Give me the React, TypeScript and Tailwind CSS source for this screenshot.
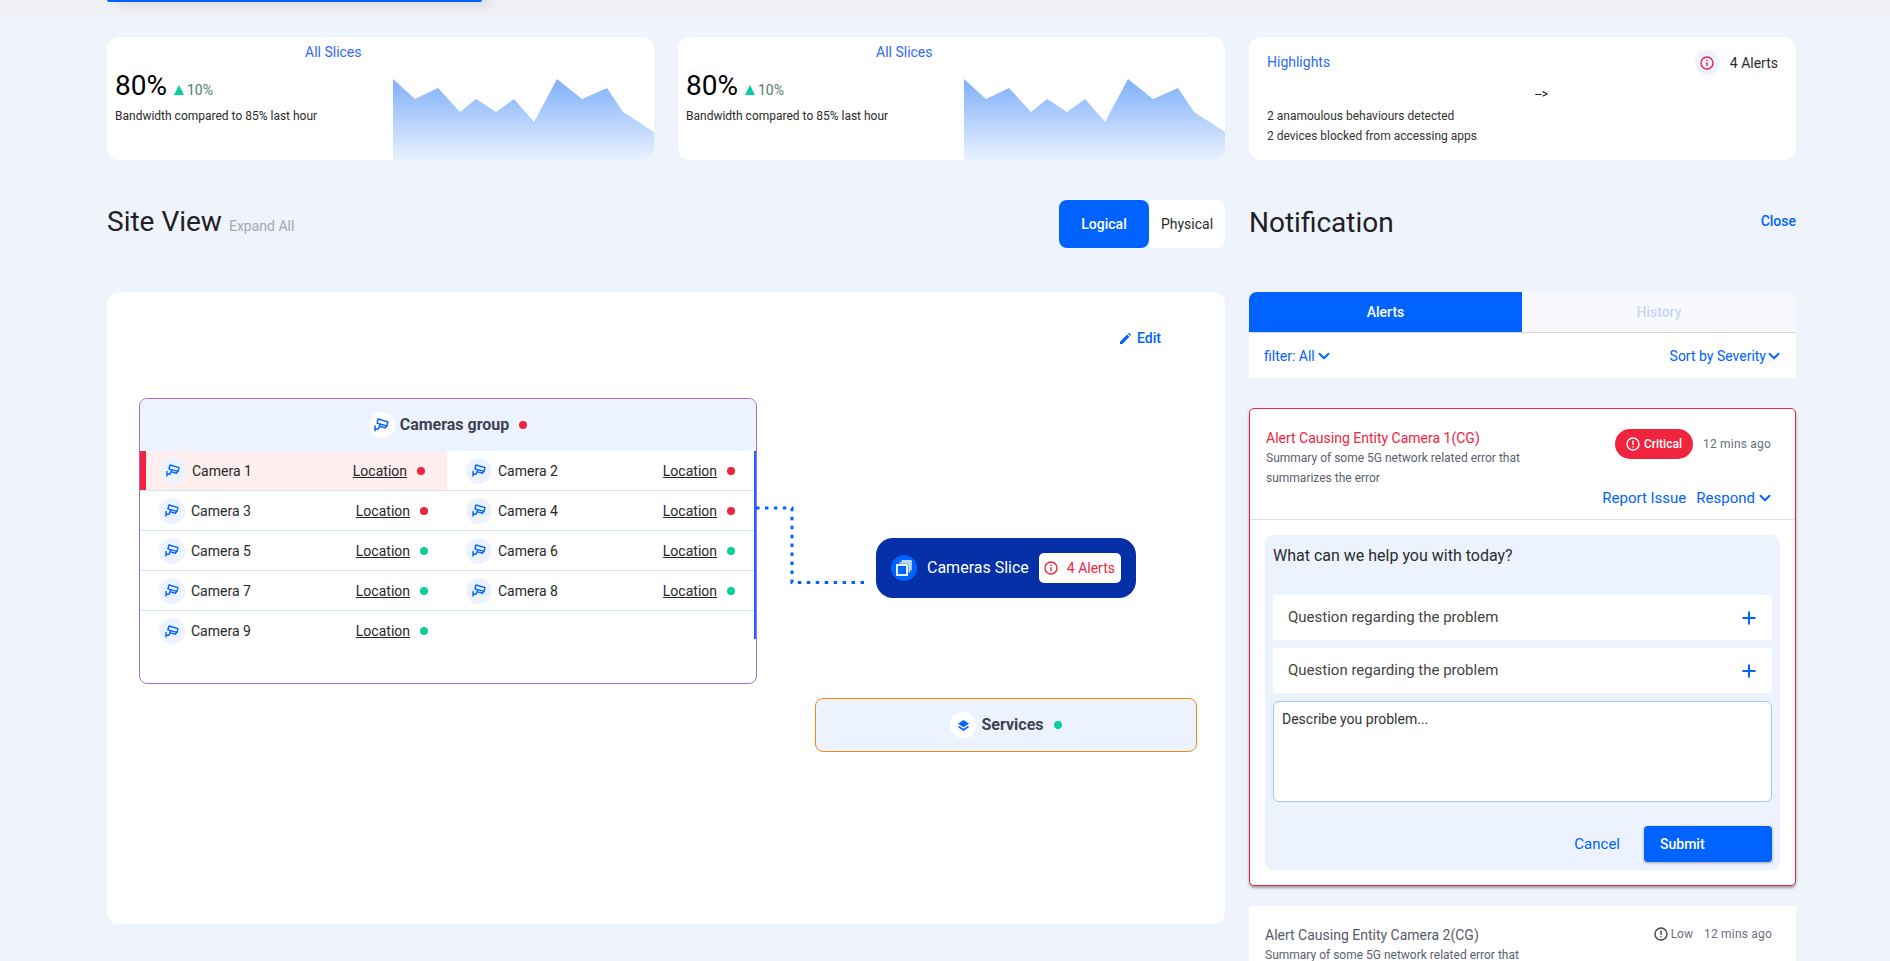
import { ChevronDown, Plus } from 'lucide-react';

const FONT = "font-['Roboto',sans-serif]";

function CameraIcon({ size = 14 }: { size?: number }) {
  return (
    <svg width={size} height={(size * 13) / 14} viewBox="0 0 14 13" fill="none" stroke="#0062ff" strokeWidth="1.4" strokeLinejoin="round" strokeLinecap="round">
      <path d="M4 1 13 3.6 11.9 7.4 2.9 4.8Z" />
      <path d="M11.9 7.4 10.4 9.2 5.6 7.9" />
      <path d="M1 7.5V12M1 10.2H4L5.6 6" />
    </svg>
  );
}

function StackIcon() {
  return (
    <svg width="13" height="13" viewBox="0 0 14 14" fill="#0062ff">
      <path d="M7 1 13 5 7 9 1 5Z" />
      <path d="M2.4 7.6 7 10.6 11.6 7.6 13 8.6 7 13 1 8.6Z" />
    </svg>
  );
}

function SliceIcon() {
  return (
    <svg width="16" height="16" viewBox="0 0 16 16" fill="none" stroke="#fff" strokeWidth="1.3">
      <rect x="1" y="5" width="10" height="10" strokeWidth="1.8" />
      <path d="M3.5 2.8H13.2V12.5" />
      <path d="M5.5 1H15V10.5" />
    </svg>
  );
}

function InfoIcon({ size = 14, color = '#f0243f' }: { size?: number; color?: string }) {
  return (
    <svg width={size} height={size} viewBox="0 0 14 14" fill="none" stroke={color} strokeWidth="1.4">
      <circle cx="7" cy="7" r="6" />
      <path d="M7 6.2V10" />
      <path d="M7 3.8V5" />
    </svg>
  );
}

function WarnIcon({ size = 14, color = '#fff' }: { size?: number; color?: string }) {
  return (
    <svg width={size} height={size} viewBox="0 0 14 14" fill="none" stroke={color} strokeWidth="1.4">
      <circle cx="7" cy="7" r="6" />
      <path d="M7 3.6V8" />
      <path d="M7 9.2V10.5" />
    </svg>
  );
}

function Dot({ ok }: { ok: boolean }) {
  return <span className={`w-2 h-2 rounded-full shrink-0 ${ok ? 'bg-[#07d09a]' : 'bg-[#f0243f]'}`} />;
}

function SliceCard() {
  return (
    <div className="relative h-[123px] bg-white rounded-xl overflow-hidden">
      <div className="h-[30px] pt-[6px] pl-[198px] text-sm leading-[18px] text-[#2f6bf2]">All Slices</div>
      <div className="pl-[8px] pt-[3px] flex items-baseline">
        <span className="text-[28px] leading-[32px] text-black">80%</span>
        <span className="ml-[7px] w-0 h-0 border-l-[5px] border-r-[5px] border-b-[10px] border-l-transparent border-r-transparent border-b-[#07d09a]" />
        <span className="ml-[3px] text-sm text-[#4f7d6a]">10%</span>
      </div>
      <div className="pl-[8px] mt-[5px] text-xs leading-[18px] text-[#2b2b2b]">Bandwidth compared to 85% last hour</div>
      <svg className="absolute right-0 bottom-0" width="261" height="81" viewBox="0 0 261 81">
        <defs>
          <linearGradient id="area" x1="0" y1="0" x2="0" y2="1">
            <stop offset="0%" stopColor="#7fb0fa" />
            <stop offset="100%" stopColor="#e9f1fe" />
          </linearGradient>
        </defs>
        <path d="M0 0 22 20 45 9 67 33 83 20 103 33 121 20 141 43 164 0 189 20 214 9 230 33 261 53V81H0Z" fill="url(#area)" />
      </svg>
    </div>
  );
}

function CamCell({ name, ok, active }: { name: string; ok: boolean; active?: boolean }) {
  return (
    <div className={`w-1/2 shrink-0 h-full flex items-center ${active ? 'bg-[#ffeeee] border-l-[6px] border-[#f0243f] pl-[14px] pr-[22px]' : 'px-[19px]'}`}>
      <span className="w-[26px] h-[26px] rounded-full bg-[#ecf3ff] flex items-center justify-center shrink-0">
        <CameraIcon />
      </span>
      <span className="ml-[6px] text-sm text-[#26272b]">{name}</span>
      <a className="ml-auto text-sm underline text-[#26272b]">Location</a>
      <span className="ml-[10px] flex"><Dot ok={ok} /></span>
    </div>
  );
}

function CamRow({ children, last }: { children: React.ReactNode; last?: boolean }) {
  return <div className={`flex shrink-0 h-[40px] ${last ? '' : 'border-b border-[#d5e0f5]'}`}>{children}</div>;
}

function SiteView() {
  return (
    <div className="relative mt-[44px] h-[632px] bg-white rounded-xl">
      <div className="absolute right-[64px] top-[36px] flex items-center gap-[6px] text-sm font-medium text-[#0062ff]">
        <svg width="11" height="11" viewBox="0 0 11 11" fill="#0062ff"><path d="M0 11V8.8L7.2 1.6 9.4 3.8 2.2 11ZM8 .8 8.5.3a.8.8 0 0 1 1.1 0l1.1 1.1a.8.8 0 0 1 0 1.1l-.5.5Z" /></svg>
        Edit
      </div>

      {/* Cameras group */}
      <div className="absolute left-[32px] top-[106px] w-[618px] h-[286px] border border-[#b366dd] rounded-lg overflow-hidden">
        <div className="h-[52px] bg-[#ecf3ff] rounded-b-lg flex items-center justify-center">
          <span className="w-[26px] h-[26px] rounded-full bg-white flex items-center justify-center">
            <CameraIcon size={15} />
          </span>
          <span className="ml-[5px] text-base font-bold text-[#3f4252]">Cameras group</span>
          <span className="ml-[10px] flex"><Dot ok={false} /></span>
        </div>
        <div className="h-[188px] border-r-2 border-[#1f66ff] flex flex-col">
          <CamRow><CamCell name="Camera 1" ok={false} active /><CamCell name="Camera 2" ok={false} /></CamRow>
          <CamRow><CamCell name="Camera 3" ok={false} /><CamCell name="Camera 4" ok={false} /></CamRow>
          <CamRow><CamCell name="Camera 5" ok /><CamCell name="Camera 6" ok /></CamRow>
          <CamRow><CamCell name="Camera 7" ok /><CamCell name="Camera 8" ok /></CamRow>
          <CamRow last><CamCell name="Camera 9" ok /></CamRow>
        </div>
      </div>

      {/* connector */}
      <svg className="absolute left-[649px] top-[214px]" width="112" height="80" viewBox="0 0 112 80" fill="none">
        <path d="M0 2H36V76.5H108" stroke="#0062ff" strokeWidth="3" strokeDasharray="3.5 5.45" />
      </svg>

      {/* Cameras slice */}
      <div className="absolute left-[769px] top-[246px] w-[260px] h-[60px] rounded-[17px] bg-[#0530a8] flex items-center pl-[15px]">
        <span className="w-[26px] h-[26px] rounded-full bg-[#0062ff] flex items-center justify-center">
          <SliceIcon />
        </span>
        <span className="ml-[10px] text-base text-white">Cameras Slice</span>
        <span className="ml-[10px] w-[82px] h-[30px] rounded-[5px] bg-white flex items-center pl-[5px]">
          <InfoIcon />
          <span className="ml-[9px] text-sm text-[#f0243f]">4 Alerts</span>
        </span>
      </div>

      {/* Services */}
      <div className="absolute left-[708px] top-[406px] w-[382px] h-[54px] border border-[#f58a07] rounded-lg bg-[#ecf3ff] flex items-center justify-center">
        <span className="w-[26px] h-[26px] rounded-full bg-white flex items-center justify-center">
          <StackIcon />
        </span>
        <span className="ml-[5px] text-base font-bold text-[#3f4252]">Services</span>
        <span className="ml-[10px] flex"><Dot ok /></span>
      </div>
    </div>
  );
}

function Accordion() {
  return (
    <div className="h-[45px] bg-white flex items-center justify-between pl-[15px] pr-[13px] text-[15px] text-[#444]">
      Question regarding the problem
      <Plus size={20} strokeWidth={2.4} className="text-[#0062ff]" />
    </div>
  );
}

function Notification() {
  return (
    <div className="mt-[44px]">
      <div className="rounded-t-lg overflow-hidden flex h-[41px] border-b border-[#d4d6df] text-sm font-medium">
        <div className="w-[273px] bg-[#0062ff] text-white flex items-center justify-center">Alerts</div>
        <div className="flex-1 bg-[#f8f9fe] text-[#c7d6f7] flex items-center justify-center">History</div>
      </div>
      <div className="h-[45px] bg-white px-[15px] flex items-center justify-between text-sm text-[#0062ff]">
        <span className="flex items-center">filter: All <ChevronDown size={18} strokeWidth={2.5} /></span>
        <span className="flex items-center">Sort by Severity <ChevronDown size={18} strokeWidth={2.5} className="-ml-[1px] -mr-[2px]" /></span>
      </div>

      {/* Open alert */}
      <div className="mt-[30px] h-[478px] bg-white border border-[#f0243f] rounded-[5px] shadow-[0_2px_3px_rgba(0,0,0,0.35)]">
        <div className="relative h-[111px] border-b border-[#dfe0e3] pl-4 pt-5">
          <div className="text-sm leading-[18px] text-[#f0243f]">Alert Causing Entity Camera 1(CG)</div>
          <div className="mt-[1px] text-xs leading-5 text-[#5a5f6f]">Summary of some 5G network related error that<br />summarizes the error</div>
          <div className="absolute right-[24px] top-[20px] flex items-center">
            <span className="h-[30px] w-[78px] rounded-full bg-[#f0243f] flex items-center justify-center gap-[4px] text-xs font-medium text-white"><WarnIcon />Critical</span>
            <span className="ml-[10px] text-xs text-[#6c7080] tracking-[0.2px]">12 mins ago</span>
          </div>
          <div className="absolute right-[21px] top-[78px] flex items-center text-[15px] text-[#0062ff]">
            Report Issue
            <span className="ml-[10px]">Respond</span>
            <ChevronDown size={18} strokeWidth={2.5} className="ml-[1px]" />
          </div>
        </div>
        <div className="mx-[15px] mt-[15px] h-[335px] bg-[#ecf3ff] rounded-lg px-2">
          <div className="h-[60px] pt-[10px] text-base leading-[22px] text-[#2b2b2b]">What can we help you with today?</div>
          <div className="flex flex-col gap-2">
            <Accordion />
            <Accordion />
          </div>
          <div className="mt-2 h-[101px] bg-white border border-[#a6c5f7] rounded-md px-2 pt-[7px] text-sm leading-5 text-[#333]">Describe you problem...</div>
          <div className="mt-6 flex items-center justify-end">
            <span className="text-[15px] text-[#0062ff]">Cancel</span>
            <button className="ml-6 w-[128px] h-[36px] bg-[#0062ff] rounded text-left pl-4 text-sm font-medium text-white shadow-[0_1px_3px_rgba(0,0,0,0.35)]">Submit</button>
          </div>
        </div>
      </div>

      {/* Collapsed alert */}
      <div className="relative mt-5 h-[200px] bg-white rounded-[3px] pl-4 pt-5">
        <div className="text-sm leading-[18px] text-[#555a6b]">Alert Causing Entity Camera 2(CG)</div>
        <div className="mt-[1px] text-xs leading-5 text-[#5a5f6f]">Summary of some 5G network related error that</div>
        <div className="absolute right-[24px] top-[20px] flex items-center text-xs text-[#6c7080]">
          <WarnIcon color="#444" />
          <span className="ml-[3px]">Low</span>
          <span className="ml-[11px] tracking-[0.2px]">12 mins ago</span>
        </div>
      </div>
    </div>
  );
}

export default function App() {
  return (
    <div className={`h-[961px] overflow-hidden bg-[#eff3fb] ${FONT}`}>
      <div className="h-[17px] bg-[#eff0f3] pl-[107px]">
        <div className="w-[375px] h-[2px] bg-[#0062ff] rounded-b shadow-[8px_1px_8px_rgba(0,0,0,0.3)]" />
      </div>

      <div className="pl-[107px] w-[1796px]">
        <div className="mt-5 grid grid-cols-3 gap-6">
          <SliceCard />
          <SliceCard />
          <div className="relative h-[123px] bg-white rounded-xl px-[18px] pt-[16px]">
            <div className="text-sm leading-[18px] text-[#2f6bf2]">Highlights</div>
            <div className="absolute right-[18px] top-[13px] flex items-center">
              <span className="w-[25px] h-[25px] rounded-full bg-[#ecf3ff] flex items-center justify-center"><InfoIcon /></span>
              <span className="ml-[10px] text-sm text-[#2b2b2b]">4 Alerts</span>
            </div>
            <div className="absolute left-[286px] top-[49px] text-xs text-black">--&gt;</div>
            <div className="mt-[35px] text-xs leading-5 text-[#333]">2 anamoulous behaviours detected<br />2 devices blocked from accessing apps</div>
          </div>
        </div>

        <div className="mt-10 flex gap-6 items-start">
          <div className="w-[1118px]">
            <div className="h-[48px] flex items-center justify-between">
              <div className="flex items-baseline pb-1">
                <h1 className="text-[28px] leading-9 text-[#1f2126]">Site View</h1>
                <span className="ml-[7px] text-sm text-[#a5a8b0]">Expand All</span>
              </div>
              <div className="flex h-[48px] text-sm">
                <div className="w-[90px] bg-[#0062ff] rounded-lg text-white font-medium flex items-center justify-center">Logical</div>
                <div className="w-[76px] bg-white rounded-r-lg text-[#2b2b2b] flex items-center justify-center">Physical</div>
              </div>
            </div>
            <SiteView />
          </div>

          <div className="w-[547px]">
            <div className="h-[48px] flex items-center justify-between">
              <h2 className="text-[28px] leading-9 text-[#1f2126] pb-[3px]">Notification</h2>
              <span className="text-sm font-medium text-[#0062ff] pb-[6px]">Close</span>
            </div>
            <Notification />
          </div>
        </div>
      </div>
    </div>
  );
}
